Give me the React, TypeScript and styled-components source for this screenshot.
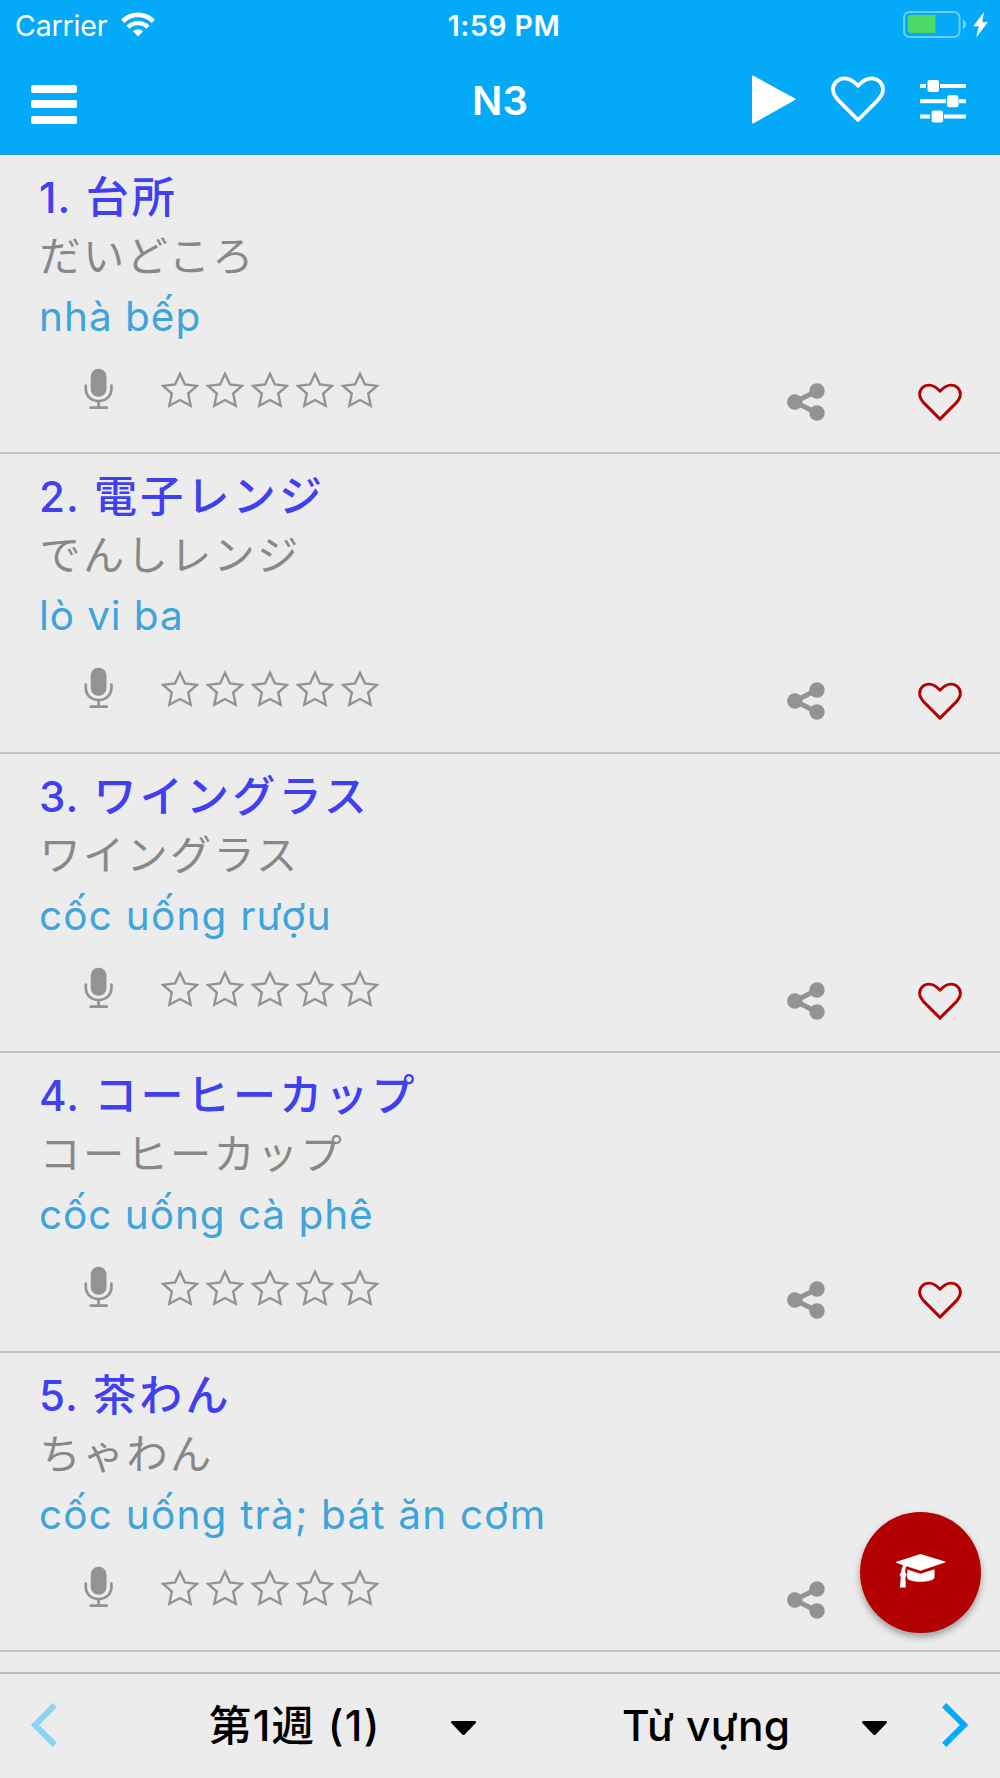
import React from "react";
import styled, { createGlobalStyle } from "styled-components";

const Global = createGlobalStyle`
  * { box-sizing: border-box; }
  body { margin: 0; background: #ececec; font-family: Inter, "Noto Sans CJK JP", sans-serif; }
  svg { display: block; flex: none; }
`;

const Screen = styled.main`
  position: relative;
  display: flex;
  flex-direction: column;
  width: 1000px;
  height: 1778px;
  overflow: hidden;
  background: #ececec;
`;

const Header = styled.header`
  flex: none;
  height: 155px;
  background: #04a9f7;
  color: #fff;
  border-bottom: 1px solid #2f94c8;
`;

const StatusBar = styled.div`
  display: grid;
  grid-template-columns: 1fr auto 1fr;
  height: 53px;
  padding: 0 12px 0 15px;
  line-height: 51px;
  font-size: 28.5px;
`;

const Carrier = styled.div`
  display: flex;
  gap: 14px;
  letter-spacing: -0.15px;
  svg { margin-top: 12px; }
`;

const Clock = styled.div`
  font-weight: 600;
  letter-spacing: 0.45px;
  padding-left: 5px;
`;

const Power = styled.div`
  display: flex;
  justify-content: flex-end;
  padding-top: 11px;
`;

const NavBar = styled.div`
  display: grid;
  grid-template-columns: 1fr auto 1fr;
  height: 101px;
  padding: 22px 34px 0 31px;
`;

const Title = styled.h1`
  margin: 0;
  padding-left: 3px;
  font-size: 40px;
  line-height: 52px;
  font-weight: 600;
`;

const MenuButton = styled.div`
  display: flex;
  flex-direction: column;
  gap: 7.3px;
  padding-top: 10px;
`;

const Bar = styled.span`
  width: 46px;
  height: 8px;
  border-radius: 2px;
  background: #fff;
`;

const Tools = styled.div`
  display: flex;
  justify-content: flex-end;
`;

const HeaderHeart = styled.div`
  margin: 1px 35px 0;
`;

const SlidersSlot = styled.div`
  margin-top: 5px;
`;

const List = styled.section`
  flex: 1;
  min-height: 0;
  overflow: hidden;
`;

const Entry = styled.article`
  height: 299.5px;
  padding: 15.2px 38px 0 39px;
  border-bottom: 2px solid #c2c2c2;

  &:first-child { height: 299px; padding-top: 14.6px; }
`;

const Word = styled.h2`
  margin: 0;
  height: 53px;
  font-size: 43px;
  line-height: 54px;
  font-weight: 500;
  letter-spacing: 3.2px;
  white-space: nowrap;
  color: #4040f2;
`;

const Ordinal = styled.span`
  margin-right: 2.4px;
  font-size: 42px;
  letter-spacing: 1.1px;
`;

const Reading = styled.div`
  height: 61.3px;
  padding-left: 0.5px;
  font-family: "Noto Sans CJK JP", sans-serif;
  font-size: 41.2px;
  line-height: 61.8px;
  font-weight: 400;
  letter-spacing: 2.3px;
  white-space: nowrap;
  color: #888;
`;

const Meaning = styled.div<{ $tracking: number }>`
  height: 65px;
  font-size: 40.5px;
  line-height: 66.6px;
  letter-spacing: ${(p) => p.$tracking}px;
  white-space: nowrap;
  color: #3fa4da;
`;

const Actions = styled.div`
  display: flex;
  align-items: flex-start;
  padding: 19px 0 0 45px;
  color: #939393;
`;

const Stars = styled.div`
  display: flex;
  gap: 7px;
  margin: 3px auto 0 48px;
`;

const ShareSlot = styled.div`
  margin: 15px 93px 0 0;
`;

const HeartSlot = styled.div`
  margin-top: 15px;
  color: #b30000;
`;

const Footer = styled.footer`
  flex: none;
  display: flex;
  height: 106px;
  padding: 29px 31px 0;
  border-top: 2px solid #bcbcbc;
  background: #ececec;
`;

const Picker = styled.div<{ $left: number; $right: number; $gap: number }>`
  display: flex;
  gap: ${(p) => p.$gap}px;
  margin-left: ${(p) => p.$left}px;
  margin-right: ${(p) => p.$right}px;
  height: 60px;
  font-size: 42.5px;
  line-height: 46px;
  font-weight: 500;
  white-space: nowrap;
  color: #000;
  svg { margin-top: 18px; }
`;

const PickerLabel = styled.span<{ $width: number; $tracking: number }>`
  width: ${(p) => p.$width}px;
  letter-spacing: ${(p) => p.$tracking}px;
`;

const Fab = styled.button`
  position: absolute;
  left: 860px;
  top: 1512px;
  display: flex;
  justify-content: center;
  width: 121px;
  height: 121px;
  padding: 42px 0 0;
  border: 0;
  border-radius: 50%;
  background: #b30000;
  box-shadow: 0 4px 7px rgba(0, 0, 0, 0.34);
`;

const Wifi = () => (
  <svg width="34" height="25" viewBox="0 0 34 25" fill="none" stroke="#fff">
    <path d="M1.6 9.2a22 22 0 0 1 30.8 0" strokeWidth="4.8" />
    <path d="M7 15.2a14.4 14.4 0 0 1 20 0" strokeWidth="4.4" />
    <path d="M17 24.4l-5.1-5.2a7.4 7.4 0 0 1 10.2 0z" fill="#fff" stroke="none" />
  </svg>
);

const Battery = () => (
  <svg width="85" height="28" viewBox="0 0 85 28">
    <rect x="1" y="1" width="55.5" height="25" rx="5.5" fill="none" stroke="#fff" strokeOpacity=".42" strokeWidth="2" />
    <path d="M8 4h24.500v18H8a3 3 0 0 1-3-3V7a3 3 0 0 1 3-3z" fill="#4cd964" />
    <path d="M60 8.500q3 2 3 5t-3 5z" fill="#fff" fillOpacity=".5" />
    <path d="M81 1 70.300 15.200h5.400L73.300 26.500 84.800 11.300h-5.600z" fill="#fff" />
  </svg>
);

const Play = () => (
  <svg width="44" height="50" viewBox="0 0 44 50">
    <path d="M0 1.500Q0 0 1.500.8L43 23.500q1 .8 0 1.600L1.500 48.300Q0 49 0 47.500z" fill="#fff" />
  </svg>
);

const Heart = ({ width, height, stroke }: { width: number; height: number; stroke: number }) => (
  <svg width={width} height={height} viewBox="0 0 54 46" fill="none" stroke="currentColor" strokeWidth={stroke} strokeLinejoin="round">
    <path d="M27 44 7.400 24.400C4 20.700 2 17.300 2 13.600 2 7.300 7 2.300 13.500 2.300 19.500 2.300 23.500 5.800 27 9.800 30.500 5.800 34.500 2.300 40.500 2.300 47 2.300 52 7.300 52 13.600c0 3.700-2 7.200-5.400 10.800z" />
  </svg>
);

const Sliders = () => (
  <svg width="46" height="44" viewBox="0 0 46 44" fill="#fff">
    <path d="M0 4h6v4H0zM20 4h26v4H20zM0 19.200h26v4H0zM39 19.200h7v4h-7zM0 34.400h10v4H0zM24 34.400h22v4H24z" />
    <rect x="7.500" y="0" width="11.500" height="12" rx="2" />
    <rect x="27" y="15.200" width="11.500" height="12" rx="2" />
    <rect x="11.600" y="30.400" width="11.500" height="12" rx="2" />
  </svg>
);

const Mic = () => (
  <svg width="29" height="42" viewBox="0 0 29 42" fill="none" stroke="currentColor" strokeWidth="2.700" strokeLinecap="round">
    <rect x="6.700" y="0.800" width="15.800" height="28" rx="7.700" fill="currentColor" stroke="none" />
    <path d="M1.800 17.500v3.500C1.800 28 7.200 33 14.600 33S27.400 28 27.400 21V17.500" />
    <path d="M14.600 33.500v6M6.700 39.700h16" />
  </svg>
);

const Star = () => (
  <svg width="38" height="38" viewBox="0 0 38 38" fill="none" stroke="currentColor" strokeWidth="2.400">
    <path d="M19 2.800 23.900 13.400 36 14.900 27.200 22.500 29.700 34.700 19 29 8.300 34.700 10.800 22.500 2 14.900 14.100 13.400z" />
  </svg>
);

const Share = () => (
  <svg width="38" height="38" viewBox="0 0 38 38" fill="currentColor">
    <path d="M8 19 29.800 8M8 19l21.800 11" stroke="currentColor" strokeWidth="4.800" />
    <circle cx="7.800" cy="19" r="7.700" />
    <circle cx="30" cy="8" r="7.700" />
    <circle cx="30" cy="30" r="7.700" />
  </svg>
);

const Chevron = ({ color, flip = false }: { color: string; flip?: boolean }) => (
  <svg width="26" height="44" viewBox="0 0 26 44" fill="none" stroke={color} strokeWidth="6">
    <path d={flip ? "M2.200 2.200 22 22 2.200 41.800" : "M23.800 2.200 4 22l19.800 19.800"} />
  </svg>
);

const Caret = () => (
  <svg width="25" height="15" viewBox="0 0 25 15">
    <path d="M1.200 0h22.600q2 .5.700 2.200L13.700 13.500q-1.200 1-2.400 0L.5 2.200Q-.8.500 1.200 0z" fill="#000" />
  </svg>
);

const Cap = () => (
  <svg width="50" height="34" viewBox="0 0 50 34" fill="#fff">
    <path d="M24.500 0 49 7.600q1 .5 0 1L24.500 16.700 10.400 12.300Q9.300 14 9.200 18.500a2.800 2.800 0 0 1 .2 4.600L9.800 33.500H3.800L4.900 23.100a2.800 2.800 0 0 1 .2-4.700Q5.500 13.500 7.200 11.200L.3 8.700q-1-.5 0-1z" />
    <path d="M11.300 15.500 24.500 19.700 38.500 15.200V23.500C37.500 26.500 31 27.700 24.500 27.700S11.500 26.500 11 23.500z" />
  </svg>
);

const entries = [
  { word: "台所", reading: "だいどころ", meaning: "nhà bếp", tracking: 1 },
  { word: "電子レンジ", reading: "でんしレンジ", meaning: "lò vi ba", tracking: 0.9 },
  { word: "ワイングラス", reading: "ワイングラス", meaning: "cốc uống rượu", tracking: 1.2 },
  { word: "コーヒーカップ", reading: "コーヒーカップ", meaning: "cốc uống cà phê", tracking: 0.95 },
  { word: "茶わん", reading: "ちゃわん", meaning: "cốc uống trà; bát ăn cơm", tracking: 1.2 },
];

export default function App() {
  return (
    <Screen lang="ja">
      <Global />
      <Header>
        <StatusBar>
          <Carrier>
            <span>Carrier</span>
            <Wifi />
          </Carrier>
          <Clock>1:59 PM</Clock>
          <Power>
            <Battery />
          </Power>
        </StatusBar>
        <NavBar>
          <MenuButton>
            <Bar />
            <Bar />
            <Bar />
          </MenuButton>
          <Title>N3</Title>
          <Tools>
            <Play />
            <HeaderHeart>
              <Heart width={54} height={46} stroke={3.8} />
            </HeaderHeart>
            <SlidersSlot>
              <Sliders />
            </SlidersSlot>
          </Tools>
        </NavBar>
      </Header>
      <List>
        {entries.map((entry, i) => (
          <Entry key={entry.word}>
            <Word>
              <Ordinal>{i + 1}. </Ordinal>
              {entry.word}
            </Word>
            <Reading>{entry.reading}</Reading>
            <Meaning $tracking={entry.tracking}>{entry.meaning}</Meaning>
            <Actions>
              <Mic />
              <Stars>
                {[0, 1, 2, 3, 4].map((n) => (
                  <Star key={n} />
                ))}
              </Stars>
              <ShareSlot>
                <Share />
              </ShareSlot>
              <HeartSlot>
                <Heart width={44} height={38} stroke={3.6} />
              </HeartSlot>
            </Actions>
          </Entry>
        ))}
      </List>
      <Footer>
        <Chevron color="#8fd3f3" />
        <Picker $left={152} $right={0} $gap={74}>
          <PickerLabel $width={168} $tracking={1.2}>第1週 (1)</PickerLabel>
          <Caret />
        </Picker>
        <Picker $left={146} $right={55} $gap={75}>
          <PickerLabel $width={165} $tracking={0.35}>Từ vựng</PickerLabel>
          <Caret />
        </Picker>
        <Chevron color="#04a9f7" flip />
      </Footer>
      <Fab aria-label="Study">
        <Cap />
      </Fab>
    </Screen>
  );
}
